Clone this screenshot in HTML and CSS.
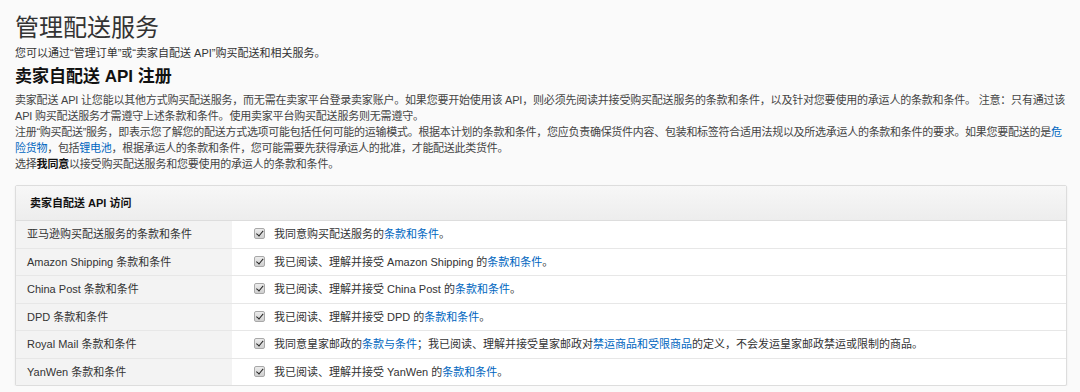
FILE: index.html
```html
<!DOCTYPE html>
<html lang="zh-CN">
<head>
<meta charset="utf-8">
<title>管理配送服务</title>
<link rel="stylesheet" href="styles.css">
</head>
<body>
<div class="page">
  <h1 class="title">管理配送服务</h1>
  <p class="subtitle">您可以通过“管理订单”或“卖家自配送 API”购买配送和相关服务。</p>
  <h2 class="section-title">卖家自配送 API 注册</h2>
  <div class="intro">
    <p>卖家配送 API 让您能以其他方式购买配送服务，而无需在卖家平台登录卖家账户。如果您要开始使用该 API，则必须先阅读并接受购买配送服务的条款和条件，以及针对您要使用的承运人的条款和条件。 注意：只有通过该 API 购买配送服务才需遵守上述条款和条件。使用卖家平台购买配送服务则无需遵守。</p>
    <p class="tight">注册“购买配送”服务，即表示您了解您的配送方式选项可能包括任何可能的运输模式。根据本计划的条款和条件，您应负责确保货件内容、包装和标签符合适用法规以及所选承运人的条款和条件的要求。如果您要配送的是<a href="#">危险货物</a>，包括<a href="#">锂电池</a>，根据承运人的条款和条件，您可能需要先获得承运人的批准，才能配送此类货件。</p>
    <p>选择<b>我同意</b>以接受购买配送服务和您要使用的承运人的条款和条件。</p>
  </div>

  <div class="panel">
    <div class="panel-head">卖家自配送 API 访问</div>
    <div class="rows">
      <div class="label">亚马逊购买配送服务的条款和条件</div>
      <div class="value"><span class="check"></span><span>我同意购买配送服务的<a href="#">条款和条件</a>。</span></div>

      <div class="label">Amazon Shipping 条款和条件</div>
      <div class="value"><span class="check"></span><span>我已阅读、理解并接受 Amazon Shipping 的<a href="#">条款和条件</a>。</span></div>

      <div class="label">China Post 条款和条件</div>
      <div class="value"><span class="check"></span><span>我已阅读、理解并接受 China Post 的<a href="#">条款和条件</a>。</span></div>

      <div class="label">DPD 条款和条件</div>
      <div class="value"><span class="check"></span><span>我已阅读、理解并接受 DPD 的<a href="#">条款和条件</a>。</span></div>

      <div class="label">Royal Mail 条款和条件</div>
      <div class="value"><span class="check"></span><span>我同意皇家邮政的<a href="#">条款与条件</a>；我已阅读、理解并接受皇家邮政对<a href="#">禁运商品和受限商品</a>的定义，不会发运皇家邮政禁运或限制的商品。</span></div>

      <div class="label last">YanWen 条款和条件</div>
      <div class="value last"><span class="check"></span><span>我已阅读、理解并接受 YanWen 的<a href="#">条款和条件</a>。</span></div>
    </div>
  </div>
</div>
</body>
</html>
```

FILE: styles.css
```css
html, body {
  margin: 0;
  padding: 0;
  background: #fafafa;
}
body {
  font-family: "Liberation Sans", Arial, "Noto Sans CJK SC", sans-serif;
  color: #333;
  font-size: 11px;
}
.page {
  padding: 0 12px 0 15px;
}
a {
  color: #0066c0;
  text-decoration: none;
}
.title {
  margin: 0;
  padding-top: 11px;
  font-size: 24px;
  line-height: 33px;
  font-weight: 400;
  color: #333;
}
.subtitle {
  margin: 1px 0 0;
  font-size: 11px;
  line-height: 16px;
  color: #333;
}
.section-title {
  margin: 5px 0 0;
  font-size: 17px;
  line-height: 22px;
  font-weight: 700;
  color: #111;
}
.intro {
  margin-top: 4px;
  color: #444;
  letter-spacing: -0.2px;
}
.intro p {
  margin: 0;
  line-height: 16px;
}
.intro p.tight {
  letter-spacing: -0.28px;
}
.intro b {
  color: #111;
}
.panel {
  margin-top: 13px;
  border: 1px solid #ddd;
  border-radius: 2px;
  background: #fff;
  box-shadow: 0 1px 2px rgba(0,0,0,0.08);
  width: 1052px;
  box-sizing: border-box;
}
.panel-head {
  height: 34px;
  line-height: 34px;
  padding-left: 14px;
  font-weight: 700;
  color: #111;
  background: linear-gradient(#f7f7f7, #ededed);
  border-bottom: 1px solid #ddd;
}
.rows {
  display: grid;
  grid-template-columns: 216px 1fr;
}
.label, .value {
  padding: 5px 11px;
  line-height: 16.5px;
  border-bottom: 1px solid #e7e7e7;
  color: #333;
}
.label {
  background: #f3f3f3;
}
.value {
  display: flex;
  align-items: center;
  gap: 9px;
  padding-left: 22px;
}
.label.last, .value.last {
  border-bottom: none;
}
.check {
  flex: none;
  width: 11px;
  height: 11px;
  border: 1px solid #a8a8a8;
  border-radius: 2px;
  box-sizing: border-box;
  background: linear-gradient(#ececec, #cfcfcf);
  position: relative;
  margin-top: -1px;
}
.check::after {
  content: "";
  position: absolute;
  left: 3px;
  top: 0px;
  width: 2.5px;
  height: 5.5px;
  border-right: 1.7px solid #222;
  border-bottom: 1.7px solid #222;
  transform: rotate(40deg);
}
```
